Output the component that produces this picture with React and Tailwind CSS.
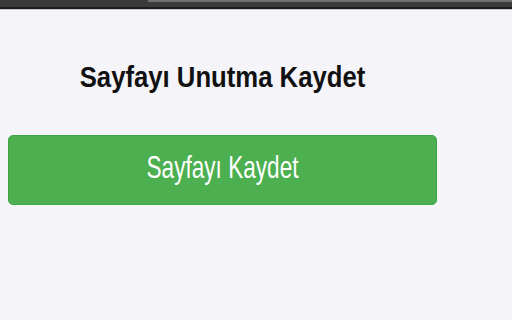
export default function App() {
  return (
    <div className="min-h-screen bg-[#f4f4f9] font-['Liberation_Sans',Arial,sans-serif]">
      {/* browser strip at the top */}
      <div className="flex h-[7px]">
        <div className="w-[148px] bg-[#3a3a3a]" />
        <div className="flex-1 flex flex-col">
          <div className="h-[2px] bg-[#707070]" />
          <div className="flex-1 bg-[#3c3c3c]" />
        </div>
      </div>
      <div className="h-[2px] bg-[#1c1c1c]" />
      <div className="h-px bg-[#c9c9cc]" />

      <div className="w-[429px] ml-2">
        <h1 className="mt-[55px] text-center text-[25.7px] font-bold leading-none text-[#111] scale-y-[1.15]">
          Sayfayı Unutma Kaydet
        </h1>
        <button
          type="button"
          className="mt-[44px] w-full h-[70px] flex items-center justify-center rounded-[5px] bg-[#4caf50] border border-[#3ea343] text-white text-[22.6px] leading-none"
        >
          <span className="scale-y-[1.35]">Sayfayı Kaydet</span>
        </button>
      </div>
    </div>
  );
}
